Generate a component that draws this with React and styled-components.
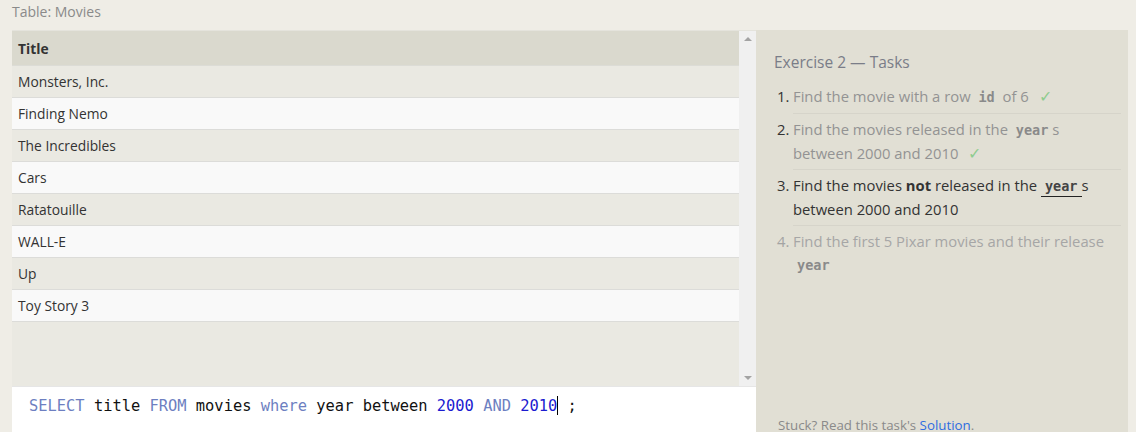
import React from "react";
import styled, { createGlobalStyle } from "styled-components";

const Global = createGlobalStyle`
  html, body { margin: 0; padding: 0; }
  body {
    background: #efede6;
    font-family: "Open Sans", "Noto Sans", sans-serif;
    overflow: hidden;
  }
`;

const Page = styled.div`
  width: 1136px;
  height: 432px;
  overflow: hidden;
  display: flex;
  flex-direction: column;
`;

const Caption = styled.div`
  height: 30px;
  padding-left: 12px;
  font-size: 14px;
  line-height: 24px;
  color: #8a8a8a;
`;

const Main = styled.div`
  display: flex;
  padding: 0 8px 0 12px;
  flex: 1;
  min-height: 0;
`;

const LeftCol = styled.div`
  width: 744px;
  display: flex;
  flex-direction: column;
`;

const TableWrap = styled.div`
  height: 356px;
  display: flex;
  background: #eae9e2;
  border-top: 1px solid #e4e3dc;
  box-sizing: border-box;
`;

const TableArea = styled.div`
  flex: 1;
  display: flex;
  flex-direction: column;
`;

const HeadRow = styled.div`
  height: 34px;
  background: #dad9ce;
  padding-left: 6px;
  display: flex;
  align-items: center;
  font-weight: 700;
  font-size: 13.8px;
  color: #333;
  border-bottom: 1px solid #dcdcd6;
`;

const Row = styled.div`
  height: 31px;
  padding-left: 6px;
  display: flex;
  align-items: center;
  font-size: 13.8px;
  color: #333;
  background: ${(p) => (p.$alt ? "#f9f9f9" : "#eae9e2")};
  border-bottom: 1px solid #dcdcd9;
`;

const Scrollbar = styled.div`
  width: 17px;
  background: #f0f0f0;
  display: flex;
  flex-direction: column;
  justify-content: space-between;
  align-items: center;
  padding: 6px 0;
  box-sizing: border-box;
`;

const Arrow = styled.div`
  width: 0;
  height: 0;
  border-left: 4px solid transparent;
  border-right: 4px solid transparent;
  ${(p) =>
    p.$down
      ? "border-top: 4px solid #a3a3a3;"
      : "border-bottom: 4px solid #a3a3a3;"}
`;

const Editor = styled.div`
  flex: 1;
  background: #ffffff;
  border-top: 1px solid #e6e6e6;
  padding: 8px 0 0 17px;
  font-family: "DejaVu Sans Mono", "Liberation Mono", monospace;
  font-size: 15.4px;
  line-height: 22px;
  color: #111;
  white-space: pre;
`;

const Tok = styled.span`
  color: ${(p) =>
    p.$k === "kw" ? "#6d7fc1" : p.$k === "num" ? "#1b1bd0" : "#111"};
`;

const Cursor = styled.span`
  display: inline-block;
  width: 0;
  height: 19px;
  border-left: 1.5px solid #000;
  vertical-align: -4px;
`;

const Panel = styled.div`
  width: 372px;
  background: #e1dfd4;
  padding: 20px 7px 0 18px;
  box-sizing: border-box;
  display: flex;
  flex-direction: column;
  position: relative;
`;

const PanelTitle = styled.div`
  font-size: 15.5px;
  line-height: 24px;
  color: #7a7d88;
  margin-bottom: 7px;
`;

const List = styled.ol`
  margin: 0;
  padding: 0 0 0 19px;
  list-style: none;
  counter-reset: task;
`;

const Item = styled.li`
  counter-increment: task;
  position: relative;
  padding: 4px 0;
  border-bottom: ${(p) => (p.$last ? "none" : "1px solid #d6d4ca")};
  font-size: 14.8px;
  line-height: 23px;
  color: ${(p) =>
    p.$state === "done" ? "#939393" : p.$state === "current" ? "#333" : "#a6a6a6"};
  &::before {
    content: counter(task) ".";
    position: absolute;
    left: -16px;
    color: ${(p) => (p.$state === "future" ? "#a3a3a3" : "#333")};
  }
`;

const Code = styled.code`
  font-family: "DejaVu Sans Mono", "Liberation Mono", monospace;
  font-weight: 700;
  font-size: 13.5px;
  padding: 0 4px;
  color: ${(p) => (p.$dark ? "#444" : "#8a8a8a")};
  ${(p) => (p.$underline ? "border-bottom: 1.5px solid #222; padding-bottom: 2px;" : "")}
`;

const Check = styled.span`
  color: #8fcc8f;
  font-size: 16px;
  margin-left: 10px;
`;

const Footer = styled.div`
  position: absolute;
  left: 22px;
  top: 385px;
  font-size: 13.3px;
  line-height: 20px;
  color: #8a8a8a;
`;

const Link = styled.a`
  color: #2f6de0;
  text-decoration: none;
`;

const movies = [
  "Monsters, Inc.",
  "Finding Nemo",
  "The Incredibles",
  "Cars",
  "Ratatouille",
  "WALL-E",
  "Up",
  "Toy Story 3",
];

export default function App() {
  return (
    <Page>
      <Global />
      <Caption>Table: Movies</Caption>
      <Main>
        <LeftCol>
          <TableWrap>
            <TableArea>
              <HeadRow>Title</HeadRow>
              {movies.map((m, i) => (
                <Row key={m} $alt={i % 2 === 1}>
                  {m}
                </Row>
              ))}
            </TableArea>
            <Scrollbar>
              <Arrow />
              <Arrow $down />
            </Scrollbar>
          </TableWrap>
          <Editor>
            <Tok $k="kw">SELECT</Tok> title <Tok $k="kw">FROM</Tok> movies{" "}
            <Tok $k="kw">where</Tok> year between <Tok $k="num">2000</Tok>{" "}
            <Tok $k="kw">AND</Tok> <Tok $k="num">2010</Tok>
            <Cursor /> ;
          </Editor>
        </LeftCol>
        <Panel>
          <PanelTitle>Exercise 2 — Tasks</PanelTitle>
          <List>
            <Item $state="done">
              Find the movie with a row <Code>id</Code> of 6<Check>✓</Check>
            </Item>
            <Item $state="done">
              Find the movies released in the <Code>year</Code>s between 2000 and
              2010<Check>✓</Check>
            </Item>
            <Item $state="current">
              Find the movies <b>not</b> released in the{" "}
              <Code $dark $underline>
                year
              </Code>
              s between 2000 and 2010
            </Item>
            <Item $state="future" $last>
              Find the first 5 Pixar movies and their release <Code>year</Code>
            </Item>
          </List>
          <Footer>
            Stuck? Read this task's <Link href="#">Solution</Link>.
          </Footer>
        </Panel>
      </Main>
    </Page>
  );
}
